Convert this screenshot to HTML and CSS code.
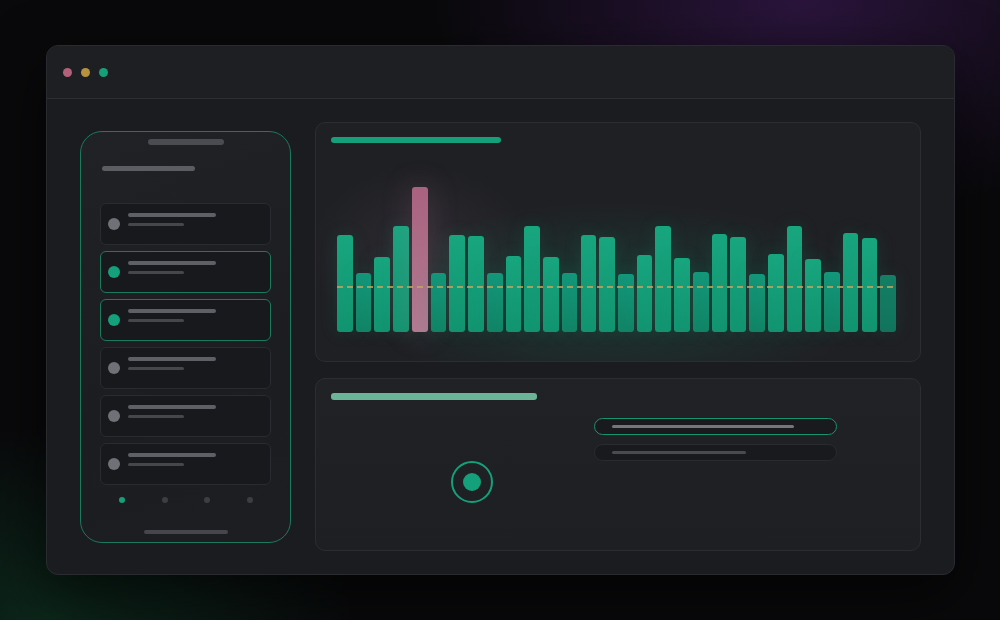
FILE: index.html
```html
<!DOCTYPE html>
<html lang="en">
<head>
    <meta charset="UTF-8">
    <meta name="viewport" content="width=device-width, initial-scale=1.0">
    <title>Dashboard preview</title>
    <link rel="stylesheet" href="styles.css">
</head>
<body>
    <div class="window">
        <div class="titlebar">
            <span class="dot red"></span>
            <span class="dot yellow"></span>
            <span class="dot green"></span>
        </div>

        <div class="window-body">
            <!-- phone mockup -->
            <div class="phone">
                <div class="notch"></div>
                <div class="phone-title"></div>
                <div class="list">
                    <div class="item"><span class="avatar"></span><div class="lines"><span class="l1"></span><span class="l2"></span></div></div>
                    <div class="item active"><span class="avatar"></span><div class="lines"><span class="l1"></span><span class="l2"></span></div></div>
                    <div class="item active"><span class="avatar"></span><div class="lines"><span class="l1"></span><span class="l2"></span></div></div>
                    <div class="item"><span class="avatar"></span><div class="lines"><span class="l1"></span><span class="l2"></span></div></div>
                    <div class="item"><span class="avatar"></span><div class="lines"><span class="l1"></span><span class="l2"></span></div></div>
                    <div class="item"><span class="avatar"></span><div class="lines"><span class="l1"></span><span class="l2"></span></div></div>
                </div>
                <div class="pager">
                    <span class="on"></span><span></span><span></span><span></span>
                </div>
                <div class="home-bar"></div>
            </div>

            <div class="panels">
                <!-- bar chart -->
                <div class="panel chart-panel">
                    <div class="panel-title green"></div>
                    <div class="chart">
                        <div class="bar" style="height:97px"></div>
                        <div class="bar lo" style="height:59px"></div>
                        <div class="bar" style="height:75px"></div>
                        <div class="bar" style="height:106px"></div>
                        <div class="bar pink" style="height:145px"></div>
                        <div class="bar lo" style="height:59px"></div>
                        <div class="bar" style="height:97px"></div>
                        <div class="bar" style="height:96px"></div>
                        <div class="bar lo" style="height:59px"></div>
                        <div class="bar" style="height:76px"></div>
                        <div class="bar" style="height:106px"></div>
                        <div class="bar" style="height:75px"></div>
                        <div class="bar lo" style="height:59px"></div>
                        <div class="bar" style="height:97px"></div>
                        <div class="bar" style="height:95px"></div>
                        <div class="bar lo" style="height:58px"></div>
                        <div class="bar" style="height:77px"></div>
                        <div class="bar" style="height:106px"></div>
                        <div class="bar" style="height:74px"></div>
                        <div class="bar lo" style="height:60px"></div>
                        <div class="bar" style="height:98px"></div>
                        <div class="bar" style="height:95px"></div>
                        <div class="bar lo" style="height:58px"></div>
                        <div class="bar" style="height:78px"></div>
                        <div class="bar" style="height:106px"></div>
                        <div class="bar" style="height:73px"></div>
                        <div class="bar lo" style="height:60px"></div>
                        <div class="bar" style="height:99px"></div>
                        <div class="bar" style="height:94px"></div>
                        <div class="bar lo last" style="height:57px"></div>
                        <div class="avg-line"></div>
                    </div>
                </div>

                <!-- lower panel -->
                <div class="panel detail-panel">
                    <div class="panel-title mint"></div>
                    <div class="detail-row">
                        <div class="target"><span></span></div>
                        <div class="options">
                            <div class="pill selected"><span class="w1"></span></div>
                            <div class="pill"><span class="w2"></span></div>
                        </div>
                    </div>
                </div>
            </div>
        </div>
    </div>
</body>
</html>
```

FILE: styles.css
```css
* {
  box-sizing: border-box;
}

html, body {
  margin: 0;
  height: 100%;
}

body {
  width: 1000px;
  height: 620px;
  overflow: hidden;
  font-family: "Inter", "Liberation Sans", sans-serif;
  background:
    radial-gradient(ellipse 460px 280px at 800px 0px, rgba(70, 30, 100, 0.55), transparent 80%),
    radial-gradient(ellipse 380px 240px at 50px 620px, rgba(15, 75, 45, 0.45), transparent 80%),
    #09090b;
  padding-top: 45px;
  padding-left: 46px;
}

.window {
  width: 909px;
  height: 530px;
  border-radius: 12px;
  background: #1b1c20;
  border: 1px solid #2a2b30;
  box-shadow: 0 20px 60px rgba(0, 0, 0, 0.6);
  overflow: hidden;
}

.titlebar {
  height: 53px;
  display: flex;
  align-items: center;
  gap: 9px;
  padding-left: 16px;
  background: #1e1f23;
  border-bottom: 1px solid #2d2e33;
}

.dot {
  width: 9px;
  height: 9px;
  border-radius: 50%;
}
.dot.red { background: #b5607a; }
.dot.yellow { background: #b8923c; }
.dot.green { background: #14a07a; }

.window-body {
  display: grid;
  grid-template-columns: 211px 1fr;
  column-gap: 24px;
  padding: 23px 33px 22px 33px;
}

/* phone */
.phone {
  align-self: center;
  height: 412px;
  border: 1.5px solid #1b7a5b;
  border-radius: 22px;
  background: linear-gradient(160deg, #212226, #1c1d21 60%, #1d1e22);
  display: flex;
  flex-direction: column;
}

.notch {
  width: 76px;
  height: 6px;
  border-radius: 3px;
  background: #4b4c51;
  margin: 7px auto 0;
}

.phone-title {
  width: 93px;
  height: 5px;
  border-radius: 3px;
  background: #5c5d62;
  margin: 21px 0 0 21px;
}

.list {
  margin-top: 32px;
  padding: 0 19px;
  display: flex;
  flex-direction: column;
  gap: 6px;
}

.item {
  height: 42px;
  border-radius: 6px;
  background: #18191c;
  border: 1px solid #2a2b30;
  display: flex;
  align-items: center;
  padding-left: 7px;
}
.item.active {
  border-color: #1b7a5b;
}

.avatar {
  width: 12px;
  height: 12px;
  border-radius: 50%;
  background: #707176;
  flex: none;
}
.item.active .avatar {
  background: #14a07a;
}

.lines {
  margin-left: 8px;
  display: flex;
  flex-direction: column;
  gap: 6px;
  margin-top: -9px;
}
.lines span {
  display: block;
  height: 3px;
  border-radius: 2px;
}
.lines .l1 { width: 88px; background: #5f6065; height: 4px; }
.lines .l2 { width: 56px; background: #46474c; }

.pager {
  display: flex;
  justify-content: space-between;
  padding: 0 37px 0 38px;
  margin-top: 12px;
}
.pager span {
  width: 6px;
  height: 6px;
  border-radius: 50%;
  background: #3d3e43;
}
.pager span.on { background: #14a07a; }

.home-bar {
  width: 84px;
  height: 4px;
  border-radius: 2px;
  background: #46474c;
  margin: 27px auto 0;
}

/* panels */
.panels {
  display: flex;
  flex-direction: column;
  gap: 16px;
}

.panel {
  border-radius: 10px;
  border: 1px solid #2c2d32;
  background: #1f2024;
  padding: 14px 15px;
}

.panel-title {
  height: 6px;
  border-radius: 3px;
}
.panel-title.green { width: 170px; background: #14a07a; }
.panel-title.mint { width: 206px; background: #6bb497; height: 7px; }

.chart-panel {
  height: 240px;
  background:
    radial-gradient(ellipse 140px 110px at 105px 130px, rgba(130, 110, 130, 0.14), transparent 80%),
    radial-gradient(ellipse 330px 120px at 300px 175px, rgba(20, 150, 110, 0.22), transparent 80%),
    #1f2024;
}

.chart {
  position: relative;
  margin: 43px 9px 0 6px;
  height: 146px;
  display: flex;
  align-items: flex-end;
  gap: 3.1px;
}

.bar {
  flex: 1;
  border-radius: 3px;
  background: linear-gradient(#18a67f, #129470);
  box-shadow: 0 0 18px rgba(20, 160, 120, 0.15);
}
.bar.lo {
  background: linear-gradient(#14977a, #118465);
}
.bar.last {
  background: linear-gradient(#147f65, #11735b);
}
.bar.pink {
  background: linear-gradient(#a9627f, #b07b91);
  box-shadow: 0 0 30px rgba(190, 120, 150, 0.25);
}

.avg-line {
  position: absolute;
  left: 0;
  right: 0;
  bottom: 44px;
  height: 2px;
  background: repeating-linear-gradient(90deg, rgba(195, 165, 95, 0.8) 0 6px, transparent 6px 10px);
}

.detail-panel {
  height: 173px;
  background: linear-gradient(180deg, #202226, #1d1f23);
}

.detail-row {
  display: flex;
  align-items: flex-start;
  margin-top: 18px;
}

.target {
  width: 42px;
  height: 42px;
  border-radius: 50%;
  border: 2px solid #14a07a;
  display: flex;
  align-items: center;
  justify-content: center;
  margin: 43px 0 0 120px;
}
.target span {
  width: 18px;
  height: 18px;
  border-radius: 50%;
  background: #14a07a;
}

.options {
  margin-left: 101px;
  display: flex;
  flex-direction: column;
  gap: 9px;
}

.pill {
  width: 243px;
  height: 17px;
  border-radius: 9px;
  border: 1px solid #2a2b30;
  background: #191a1e;
  display: flex;
  align-items: center;
  padding-left: 17px;
}
.pill.selected {
  border: 1.5px solid #17946f;
}
.pill span {
  height: 3px;
  border-radius: 2px;
}
.pill .w1 { width: 182px; background: #75767b; }
.pill .w2 { width: 134px; background: #4a4b50; }
```
